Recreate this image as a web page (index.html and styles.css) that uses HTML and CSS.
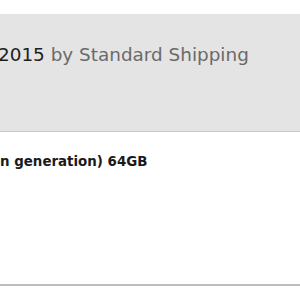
FILE: index.html
```html
<!DOCTYPE html>
<html lang="en">
<head>
    <meta charset="UTF-8">
    <title>Order</title>
    <link rel="stylesheet" href="styles.css">
</head>
<body>
<div class="order">
    <div class="order-header">
        <p class="delivery"><span class="date">2015</span> <span class="method">by Standard Shipping</span></p>
    </div>
    <div class="order-item">
        <p class="item-name">n generation) 64GB</p>
    </div>
</div>
</body>
</html>
```

FILE: styles.css
```css
body {
    margin: 0;
    background-color: #fff;
    font-family: "DejaVu Sans", Verdana, sans-serif;
    overflow: hidden;
}
.order {
    margin-top: 14px;
}
.order-header {
    height: 118px;
    background-color: #e4e4e4;
    border-bottom: 1px solid #c9c9c9;
    box-sizing: border-box;
    padding-top: 29px;
}
.delivery {
    margin: 0 0 0 -2px;
    font-size: 18.4px;
    line-height: 24px;
    white-space: nowrap;
}
.date {
    color: #1e1e1e;
}
.method {
    color: #6a6a6a;
}
.order-item {
    height: 154px;
    box-sizing: border-box;
    border-bottom: 2px solid #bdbdbd;
    padding-top: 21px;
}
.item-name {
    margin: 0;
    font-size: 13.4px;
    font-weight: bold;
    line-height: 18px;
    color: #1a1a1a;
    white-space: nowrap;
}
```
